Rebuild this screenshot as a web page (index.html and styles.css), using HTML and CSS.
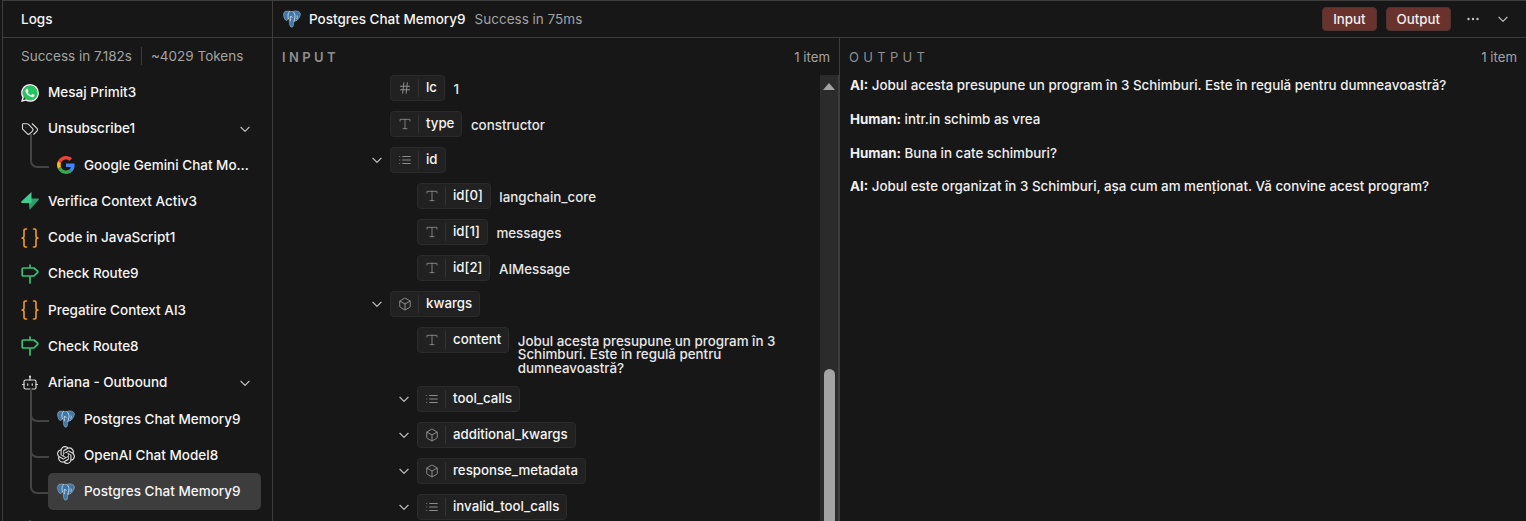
FILE: index.html
```html
<!DOCTYPE html>
<html lang="ro">
<head>
<meta charset="utf-8">
<title>Logs</title>
<link rel="stylesheet" href="styles.css">
</head>
<body>
<svg class="defs" aria-hidden="true">
  <symbol id="pg" viewBox="0 0 24 24">
    <path fill="#3f78a8" stroke="#c9d5df" stroke-width=".6" d="M6 1.500C2 1 .5 3.500.8 7c.4 3.500 2.200 7.500 4.200 7 1-.2 1.500-1.500 2.200-2.200L8.500 13c-.2 3 .1 7 1.300 9 1.200 1.500 3.200 1 3.800-.5.600-1.700.4-4.500.9-6.500 1.500 0 3.500-.5 4.500-1.500 2.500-2.500 4.500-6 4.200-8.500-.2-2.500-3.700-4-6.700-3.800C14.800 1.300 13 2 12 2c-2-.5-4-.3-6-.5z"/>
    <path fill="none" stroke="#e6ecf1" stroke-width="1" stroke-linecap="round" d="M8.500 2c-1.500 1.800-2 4-1.800 6.500.1 1.200.1 2.200.5 3.300M13.500 2.500c2 1.600 2.800 4 2.400 6.800-.2 1.700-.9 3.700-1.400 5.700M10 9c-.8 2 .1 3.500-.2 5.500M10 9c1.300-.7 2.300-.2 2.300 1M18.800 8c.4 1.300.2 2.500-.3 3.700"/>
  </symbol>
  <symbol id="box" viewBox="0 0 24 24"><path fill="none" stroke="currentColor" stroke-width="1.500" stroke-linecap="round" stroke-linejoin="round" d="M21 8a2 2 0 0 0-1-1.730l-7-4a2 2 0 0 0-2 0l-7 4A2 2 0 0 0 3 8v8a2 2 0 0 0 1 1.730l7 4a2 2 0 0 0 2 0l7-4A2 2 0 0 0 21 16ZM3.300 7l8.700 5 8.700-5M12 22V12"/></symbol>
  <symbol id="list" viewBox="0 0 24 24"><path fill="none" stroke="currentColor" stroke-width="1.500" stroke-linecap="round" d="M3 12h.01M3 18h.01M3 6h.01M8 12h13M8 18h13M8 6h13"/></symbol>
  <symbol id="txt" viewBox="0 0 24 24"><path fill="none" stroke="currentColor" stroke-width="1.300" stroke-linecap="round" d="M3.500 7V4h17v3M12 4v16M8.500 20h7"/></symbol>
  <symbol id="num" viewBox="0 0 24 24"><path fill="none" stroke="currentColor" stroke-width="1.500" stroke-linecap="round" d="M4 9h16M4 15h16M10 3 8 21M16 3l-2 18"/></symbol>
  <symbol id="chev" viewBox="0 0 24 24"><path fill="none" stroke="currentColor" stroke-width="2" stroke-linecap="round" stroke-linejoin="round" d="m5 9 7 7 7-7"/></symbol>
  <symbol id="braces" viewBox="0 0 18 20"><path fill="none" stroke="#f59a23" stroke-width="1.600" stroke-linecap="round" stroke-linejoin="round" d="M5.500 1H4.500a1.500 1.500 0 0 0-1.500 1.500V8a2 2 0 0 1-2 2 2 2 0 0 1 2 2v5.500A1.500 1.500 0 0 0 4.500 19h1M12.500 19h1a1.500 1.500 0 0 0 1.500-1.500V12a2 2 0 0 1 2-2 2 2 0 0 1-2-2V2.500A1.500 1.500 0 0 0 13.500 1h-1"/></symbol>
  <symbol id="sign" viewBox="0 0 18 20"><path fill="none" stroke="#35c27b" stroke-width="1.700" stroke-linecap="round" stroke-linejoin="round" d="M9 1v3M9 12v7M2.200 4H13l3.600 3.200a.8.800 0 0 1 0 1.200L13 12H2.200a1 1 0 0 1-1-1V5a1 1 0 0 1 1-1z"/></symbol>
  <symbol id="dots" viewBox="0 0 12 4"><circle cx="1.500" cy="2" r="1.200" fill="currentColor"/><circle cx="6" cy="2" r="1.200" fill="currentColor"/><circle cx="10.500" cy="2" r="1.200" fill="currentColor"/></symbol>
</svg>

<div class="app">
  <aside class="side">
    <header class="side-head">Logs</header>
    <div class="stats"><span>Success in 7.182s</span><i class="vr"></i><span>~4029 Tokens</span></div>
    <nav class="runs">
      <div class="run">
        <svg class="ico" viewBox="0 0 24 24"><circle cx="12" cy="12" r="10" fill="#25c45f"/><path fill="#f2f2f2" d="M17.472 14.382c-.297-.149-1.758-.867-2.030-.967-.273-.099-.471-.148-.670.150-.197.297-.767.966-.940 1.164-.173.199-.347.223-.644.075-.297-.150-1.255-.463-2.390-1.475-.883-.788-1.480-1.761-1.653-2.059-.173-.297-.018-.458.130-.606.134-.133.298-.347.446-.520.149-.174.198-.298.298-.497.099-.198.050-.371-.025-.520-.075-.149-.669-1.612-.916-2.207-.242-.579-.487-.500-.669-.510-.173-.008-.371-.010-.570-.010-.198 0-.520.074-.792.372-.272.297-1.040 1.016-1.040 2.479 0 1.462 1.065 2.875 1.213 3.074.149.198 2.096 3.200 5.077 4.487.709.306 1.262.489 1.694.625.712.227 1.360.195 1.871.118.571-.085 1.758-.719 2.006-1.413.248-.694.248-1.289.173-1.413-.074-.124-.272-.198-.570-.347m-5.421 7.403h-.004a9.870 9.870 0 01-5.031-1.378l-.361-.214-3.741.982.998-3.648-.235-.374a9.860 9.860 0 01-1.510-5.260c.001-5.450 4.436-9.884 9.888-9.884 2.640 0 5.122 1.030 6.988 2.898a9.825 9.825 0 012.893 6.994c-.003 5.450-4.437 9.884-9.885 9.884m8.413-18.297A11.815 11.815 0 0012.050 0C5.495 0 .160 5.335.157 11.892c0 2.096.547 4.142 1.588 5.945L.057 24l6.305-1.654a11.882 11.882 0 005.683 1.448h.005c6.554 0 11.890-5.335 11.893-11.893a11.821 11.821 0 00-3.480-8.413z"/></svg>
        <span class="name">Mesaj Primit3</span>
      </div>
      <div class="run">
        <svg class="ico mono" viewBox="0 0 24 24"><path fill="none" stroke="currentColor" stroke-width="1.500" stroke-linecap="round" stroke-linejoin="round" d="m15 5 6.300 6.300a2.400 2.400 0 0 1 0 3.400L17 19M9.586 5.586A2 2 0 0 0 8.172 5H3a1 1 0 0 0-1 1v5.172a2 2 0 0 0 .586 1.414L8.290 18.290a2.426 2.426 0 0 0 3.420 0l3.580-3.580a2.426 2.426 0 0 0 0-3.420z"/><circle cx="6.500" cy="9.500" r=".6" fill="currentColor"/></svg>
        <span class="name">Unsubscribe1</span>
        <svg class="toggle"><use href="#chev"/></svg>
      </div>
      <div class="run sub last">
        <svg class="ico" viewBox="0 0 48 48"><path fill="#EA4335" d="M24 9.500c3.540 0 6.710 1.220 9.210 3.600l6.850-6.850C35.900 2.380 30.470 0 24 0 14.620 0 6.510 5.380 2.560 13.220l7.980 6.190C12.430 13.720 17.740 9.500 24 9.500z"/><path fill="#4285F4" d="M46.980 24.550c0-1.570-.150-3.090-.380-4.550H24v9.020h12.940c-.580 2.960-2.260 5.480-4.780 7.180l7.730 6c4.510-4.180 7.090-10.360 7.090-17.650z"/><path fill="#FBBC05" d="M10.530 28.590c-.480-1.450-.760-2.990-.760-4.590s.270-3.140.760-4.590l-7.980-6.190C.920 16.460 0 20.120 0 24c0 3.880.920 7.540 2.560 10.780l7.970-6.190z"/><path fill="#34A853" d="M24 48c6.480 0 11.930-2.130 15.890-5.810l-7.730-6c-2.150 1.450-4.920 2.300-8.160 2.300-6.260 0-11.570-4.220-13.470-9.910l-7.980 6.190C6.510 42.620 14.620 48 24 48z"/></svg>
        <span class="name">Google Gemini Chat Model</span>
      </div>
      <div class="run">
        <svg class="ico" viewBox="0 0 18 18"><path fill="#2e9e6e" d="M7.500 6.500H17c.8 0 1.200.9.700 1.500L8.500 18z"/><path fill="#3ecf8e" d="M10.500 0v11H1c-.8 0-1.200-.9-.7-1.500z"/></svg>
        <span class="name">Verifica Context Activ3</span>
      </div>
      <div class="run"><svg class="ico tall"><use href="#braces"/></svg><span class="name">Code in JavaScript1</span></div>
      <div class="run"><svg class="ico tall"><use href="#sign"/></svg><span class="name">Check Route9</span></div>
      <div class="run"><svg class="ico tall"><use href="#braces"/></svg><span class="name">Pregatire Context AI3</span></div>
      <div class="run"><svg class="ico tall"><use href="#sign"/></svg><span class="name">Check Route8</span></div>
      <div class="run">
        <svg class="ico mono" viewBox="0 0 24 24"><path fill="none" stroke="currentColor" stroke-width="1.600" stroke-linecap="round" stroke-linejoin="round" d="M12 8V4M2 14h2M20 14h2M15 13v2M9 13v2"/><rect x="4" y="8" width="16" height="12" rx="2" fill="none" stroke="currentColor" stroke-width="1.600"/><circle cx="12" cy="3.500" r="1.500" fill="currentColor"/></svg>
        <span class="name">Ariana - Outbound</span>
        <svg class="toggle"><use href="#chev"/></svg>
      </div>
      <div class="run sub"><svg class="ico"><use href="#pg"/></svg><span class="name">Postgres Chat Memory9</span></div>
      <div class="run sub">
        <svg class="ico mono" viewBox="0 0 24 24"><path fill="currentColor" d="M22.282 9.821a5.985 5.985 0 0 0-.516-4.911 6.046 6.046 0 0 0-6.510-2.900A6.065 6.065 0 0 0 4.981 4.182a5.985 5.985 0 0 0-3.998 2.900 6.046 6.046 0 0 0 .743 7.097 5.980 5.980 0 0 0 .511 4.911 6.051 6.051 0 0 0 6.515 2.900A5.985 5.985 0 0 0 13.260 24a6.056 6.056 0 0 0 5.772-4.206 5.989 5.989 0 0 0 3.998-2.900 6.056 6.056 0 0 0-.748-7.073zm-9.022 12.608a4.476 4.476 0 0 1-2.876-1.041l.142-.080 4.778-2.758a.795.795 0 0 0 .393-.681v-6.737l2.020 1.169a.071.071 0 0 1 .038.052v5.583a4.504 4.504 0 0 1-4.495 4.494zm-9.661-4.125a4.471 4.471 0 0 1-.535-3.014l.142.085 4.783 2.758a.771.771 0 0 0 .781 0l5.843-3.369v2.333a.080.080 0 0 1-.033.061L9.740 19.950a4.499 4.499 0 0 1-6.141-1.646zM2.341 7.896a4.485 4.485 0 0 1 2.365-1.973V11.600a.766.766 0 0 0 .388.677l5.815 3.354-2.020 1.169a.076.076 0 0 1-.071 0l-4.830-2.787A4.504 4.504 0 0 1 2.341 7.872zm16.596 3.855L13.104 8.364 15.119 7.200a.076.076 0 0 1 .071 0l4.830 2.791a4.494 4.494 0 0 1-.676 8.105v-5.678a.790.790 0 0 0-.407-.667zm2.011-3.023l-.142-.085-4.774-2.782a.776.776 0 0 0-.785 0L9.409 9.230V6.897a.066.066 0 0 1 .028-.061l4.830-2.787a4.499 4.499 0 0 1 6.680 4.660zM8.307 12.863l-2.020-1.164a.080.080 0 0 1-.038-.057V6.074a4.499 4.499 0 0 1 7.376-3.454l-.142.081L8.704 5.459a.795.795 0 0 0-.393.681zm1.097-2.365l2.602-1.500 2.607 1.500v2.999l-2.597 1.500-2.607-1.500Z"/></svg>
        <span class="name">OpenAI Chat Model8</span>
      </div>
      <div class="run sub last selected"><svg class="ico"><use href="#pg"/></svg><span class="name">Postgres Chat Memory9</span></div>
      <div class="run">
        <svg class="ico mono" viewBox="0 0 24 24"><circle cx="12" cy="8" r="5" fill="none" stroke="currentColor" stroke-width="1.600"/></svg>
      </div>
    </nav>
  </aside>

  <main class="main">
    <header class="main-head">
      <svg class="ico"><use href="#pg"/></svg>
      <span class="title">Postgres Chat Memory9</span>
      <span class="status">Success in 75ms</span>
      <span class="actions">
        <button class="pill">Input</button>
        <button class="pill">Output</button>
        <svg class="dots"><use href="#dots"/></svg>
        <svg class="toggle"><use href="#chev"/></svg>
      </span>
    </header>
    <div class="panes">
      <section class="pane pane-in">
        <div class="pane-head"><span class="caps">INPUT</span><span class="count">1 item</span></div>
        <div class="scroller">
          <div class="tree">
            <div class="node d0"><i class="slot"></i><span class="chip"><span class="type"><svg><use href="#num"/></svg></span><b>lc</b></span><span class="val">1</span></div>
            <div class="node d0"><i class="slot"></i><span class="chip"><span class="type"><svg><use href="#txt"/></svg></span><b>type</b></span><span class="val">constructor</span></div>
            <div class="node d0"><i class="slot"><svg><use href="#chev"/></svg></i><span class="chip"><span class="type"><svg><use href="#list"/></svg></span><b>id</b></span></div>
            <div class="node d1"><i class="slot"></i><span class="chip"><span class="type"><svg><use href="#txt"/></svg></span><b>id[0]</b></span><span class="val">langchain_core</span></div>
            <div class="node d1"><i class="slot"></i><span class="chip"><span class="type"><svg><use href="#txt"/></svg></span><b>id[1]</b></span><span class="val">messages</span></div>
            <div class="node d1"><i class="slot"></i><span class="chip"><span class="type"><svg><use href="#txt"/></svg></span><b>id[2]</b></span><span class="val">AIMessage</span></div>
            <div class="node d0"><i class="slot"><svg><use href="#chev"/></svg></i><span class="chip"><span class="type"><svg><use href="#box"/></svg></span><b>kwargs</b></span></div>
            <div class="node d1"><i class="slot"></i><span class="chip"><span class="type"><svg><use href="#txt"/></svg></span><b>content</b></span><span class="val">Jobul acesta presupune un program în 3 Schimburi. Este în regulă pentru dumneavoastră?</span></div>
            <div class="node d1"><i class="slot"><svg><use href="#chev"/></svg></i><span class="chip"><span class="type"><svg><use href="#list"/></svg></span><b>tool_calls</b></span></div>
            <div class="node d1"><i class="slot"><svg><use href="#chev"/></svg></i><span class="chip"><span class="type"><svg><use href="#box"/></svg></span><b>additional_kwargs</b></span></div>
            <div class="node d1"><i class="slot"><svg><use href="#chev"/></svg></i><span class="chip"><span class="type"><svg><use href="#box"/></svg></span><b>response_metadata</b></span></div>
            <div class="node d1"><i class="slot"><svg><use href="#chev"/></svg></i><span class="chip"><span class="type"><svg><use href="#list"/></svg></span><b>invalid_tool_calls</b></span></div>
          </div>
          <div class="bar"><i class="arrow"></i><i class="thumb"></i></div>
        </div>
      </section>
      <section class="pane pane-out">
        <div class="pane-head"><span class="caps">OUTPUT</span><span class="count">1 item</span></div>
        <div class="messages">
          <p><strong>AI:</strong> Jobul acesta presupune un program în 3 Schimburi. Este în regulă pentru dumneavoastră?</p>
          <p><strong>Human:</strong> intr.in schimb as vrea</p>
          <p><strong>Human:</strong> Buna in cate schimburi?</p>
          <p><strong>AI:</strong> Jobul este organizat în 3 Schimburi, așa cum am menționat. Vă convine acest program?</p>
        </div>
      </section>
    </div>
  </main>
</div>
</body>
</html>
```
FILE: styles.css
```css
* { box-sizing: border-box; }
html, body { margin: 0; height: 100%; overflow: hidden; background: #171717; }
body { font: 500 13.500px/17px Inter, "Liberation Sans", sans-serif; color: #f5f5f5; }
.defs { position: absolute; width: 0; height: 0; }

.app { display: flex; height: 521px; margin-left: 2px; border-top: 1px solid #3d3d3d; border-left: 1px solid #3d3d3d; }

.side { width: 270px; flex: none; border-right: 1px solid #3d3d3d; overflow: hidden; display: flex; flex-direction: column; }
.side-head { height: 37px; flex: none; padding: 0 18px; display: flex; align-items: center; border-bottom: 1px solid #3d3d3d; }
.stats { flex: none; height: 36.500px; padding: 0 18px; display: flex; align-items: center; gap: 9px; color: #a3a3a3; font-weight: 400; }
.vr { width: 1px; height: 18px; background: #3d3d3d; }
.runs { padding: 0 11px 0 9px; }

.run { position: relative; display: flex; align-items: center; gap: 9px; height: 36.270px; padding: 0 9px; border-radius: 5px; }
.name { flex: 1; min-width: 0; white-space: nowrap; overflow: hidden; text-overflow: ellipsis; }
.ico { width: 18px; height: 18px; flex: none; display: block; }
.ico.tall { height: 20px; }
.mono { color: #d8d8d8; }
.toggle { width: 14px; height: 14px; flex: none; color: #bdbdbd; }
.sub { margin-left: 36px; }
.sub::before { content: ""; position: absolute; left: -18px; top: -13px; width: 17px; height: 32px; border-left: 2px solid #434343; border-bottom: 2px solid #434343; border-bottom-left-radius: 7px; }
.sub:not(.last)::after { content: ""; position: absolute; left: -18px; top: 0; height: 37px; border-left: 2px solid #434343; }
.selected { background: #3d3d3d; }

.main { flex: 1; min-width: 0; display: flex; flex-direction: column; }
.main-head { height: 37px; flex: none; display: flex; align-items: center; padding: 0 16px 0 10px; border-bottom: 1px solid #3d3d3d; }
.title { margin-left: 8px; }
.status { margin-left: 9px; color: #a3a3a3; font-weight: 400; }
.actions { margin-left: auto; display: flex; align-items: center; }
.pill { height: 24px; padding: 0 10px; border: 1px solid #4f3330; border-radius: 4px; background: #6a322d; color: #f0f0f0; font: 500 13.300px/17px Inter, "Liberation Sans", sans-serif; margin-right: 9px; }
.dots { width: 12px; height: 4px; flex: none; margin-left: 7px; color: #c4c4c4; }
.actions .toggle { margin-left: 17px; }

.panes { flex: 1; min-height: 0; display: flex; }
.pane { min-width: 0; display: flex; flex-direction: column; }
.pane-in { width: 567px; flex: none; border-right: 1px solid #3d3d3d; }
.pane-out { flex: 1; }
.pane-head { height: 36.500px; flex: none; display: flex; align-items: center; justify-content: space-between; padding: 2px 9px 0; }
.caps { font-size: 13px; font-weight: 600; color: #8f8f8f; letter-spacing: 3.400px; }
.pane-out .caps { font-weight: 400; letter-spacing: 4.300px; }
.count { color: #a3a3a3; font-weight: 400; font-size: 13.200px; }

.scroller { flex: 1; min-height: 0; display: flex; overflow: hidden; }
.tree { flex: 1; min-width: 0; display: flex; flex-direction: column; gap: 9.500px; }
.node { display: flex; align-items: flex-start; flex: none; }
.d0 { margin-left: 93px; }
.d1 { margin-left: 120px; }
.slot { width: 24px; height: 26.500px; flex: none; display: flex; align-items: center; justify-content: center; padding-right: 2px; color: #bdbdbd; }
.slot svg { width: 14px; height: 14px; }
.chip { height: 26.500px; flex: none; display: flex; align-items: center; background: #212121; border: 1px solid #2b2b2b; border-radius: 4px; padding-right: 7px; font-size: 13.250px; }
.type { width: 28px; height: 18px; flex: none; display: flex; align-items: center; justify-content: center; border-right: 1px solid #333; margin-right: 7px; color: #9a9a9a; }
.type svg { width: 14px; height: 14px; }
.chip b { font-weight: 500; }
.val { margin: 8px 0 1px 8.500px; max-width: 270px; font-size: 13.360px; line-height: 13.500px; color: #e8e8e8; }

.bar { position: relative; width: 19px; flex: none; background: #2b2b2b; border-right: 1px solid #3d3d3d; }
.arrow { position: absolute; left: 3px; top: 8px; border: 6.500px solid transparent; border-top: 0; border-bottom: 7px solid #a3a3a3; }
.thumb { position: absolute; left: 4px; top: 294px; width: 11px; height: 200px; border-radius: 6px; background: #a3a3a3; }

.messages { padding: 2.900px 10px 0; font-size: 13.360px; }
.messages p { margin: 0 0 16.700px; color: #f0f0f0; }
.messages strong { font-weight: 700; }
```
